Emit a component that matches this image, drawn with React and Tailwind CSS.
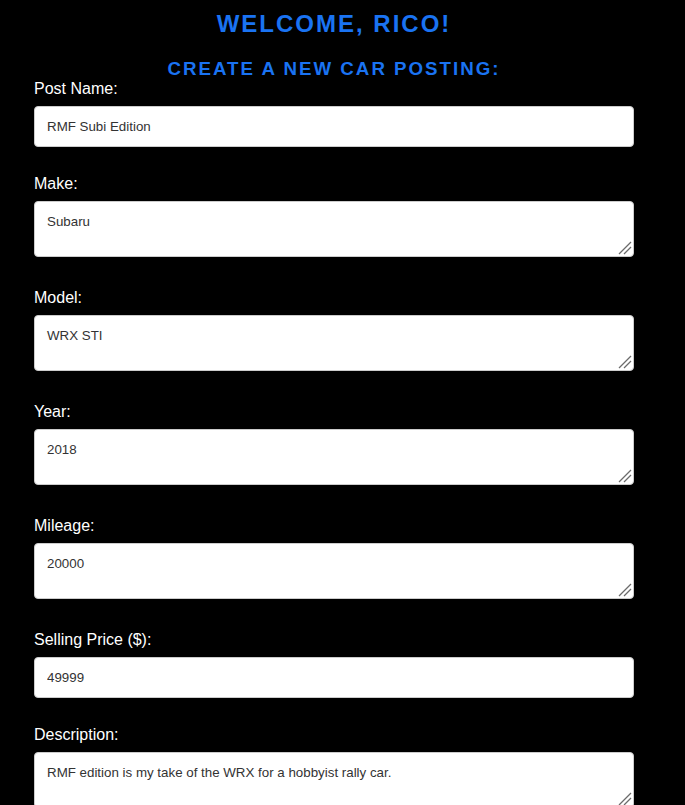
export default function App() {
    const fields = [
        { label: "Post Name:", value: "RMF Subi Edition", type: "input" },
        { label: "Make:", value: "Subaru", type: "textarea" },
        { label: "Model:", value: "WRX STI", type: "textarea" },
        { label: "Year:", value: "2018", type: "textarea" },
        { label: "Mileage:", value: "20000", type: "textarea" },
        { label: "Selling Price ($):", value: "49999", type: "input" },
        { label: "Description:", value: "RMF edition is my take of the WRX for a hobbyist rally car.", type: "textarea" },
    ];

    return (
        <div className="min-h-screen bg-black pt-[10px] font-['Liberation_Sans',Arial,sans-serif]">
            <div className="w-[600px] ml-[34px]">
                {/* Headings */}
                <h1 className="text-center text-[24px] leading-[28px] font-bold tracking-[2px] text-[#1a73f2]">
                    WELCOME, RICO!
                </h1>
                <h2 className="mt-[20px] text-center text-[18.72px] leading-[21px] font-bold tracking-[2px] text-[#1a73f2]">
                    CREATE A NEW CAR POSTING:
                </h2>

                {/* Form */}
                <form className="flex flex-col">
                    {fields.map((f) => (
                        <div key={f.label} className="flex flex-col">
                            <label className="block text-white text-[16px] leading-[18px] mt-[1px] mb-[8px]">{f.label}</label>
                            {f.type === "input" ? (
                                <input
                                    type="text"
                                    defaultValue={f.value}
                                    className="block w-full h-[41px] px-[12px] bg-white text-[#333] text-[13.33px] rounded-[4px] border border-[#ccc] outline-none mb-[27px]"
                                />
                            ) : (
                                <div className="relative mb-[31px]">
                                    <textarea
                                        defaultValue={f.value}
                                        className="block w-full h-[56px] px-[12px] py-[12px] leading-[16px] bg-white text-[#333] text-[13.33px] rounded-[4px] border border-[#ccc] outline-none resize-none"
                                    />
                                    {/* resize grip */}
                                    <svg className="absolute right-[2px] bottom-[2px] pointer-events-none" width="14" height="14" viewBox="0 0 14 14">
                                        <line x1="1" y1="13" x2="13" y2="1" stroke="#6b6b6b" strokeWidth="1.3" />
                                        <line x1="6" y1="13" x2="13" y2="6" stroke="#6b6b6b" strokeWidth="1.3" />
                                    </svg>
                                </div>
                            )}
                        </div>
                    ))}
                </form>
            </div>
        </div>
    );
}
